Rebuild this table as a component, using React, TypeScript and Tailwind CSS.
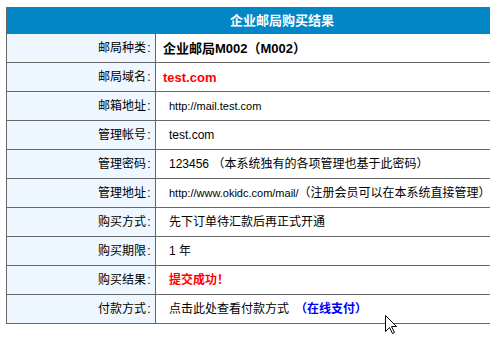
import React from "react";

const rows: { label: string; value: React.ReactNode }[] = [
  {
    label: "邮局种类",
    value: <span className="font-bold text-[13px] text-black">企业邮局M002（M002）</span>,
  },
  {
    label: "邮局域名",
    value: <span className="font-bold text-[13px] text-[#ff0000]">test.com</span>,
  },
  {
    label: "邮箱地址",
    value: <span className="ml-[6px] text-[11px]">http://mail.test.com</span>,
  },
  {
    label: "管理帐号",
    value: <span className="ml-[6px]">test.com</span>,
  },
  {
    label: "管理密码",
    value: <span className="ml-[6px]">123456 （本系统独有的各项管理也基于此密码）</span>,
  },
  {
    label: "管理地址",
    value: (
      <span className="ml-[6px]">
        <span className="text-[11px]">http://www.okidc.com/mail/</span>
        （注册会员可以在本系统直接管理）
      </span>
    ),
  },
  {
    label: "购买方式",
    value: <span className="ml-[6px]">先下订单待汇款后再正式开通</span>,
  },
  {
    label: "购买期限",
    value: <span className="ml-[6px]">1 年</span>,
  },
  {
    label: "购买结果",
    value: <span className="ml-[6px] font-bold text-[#ff0000]">提交成功！</span>,
  },
  {
    label: "付款方式",
    value: (
      <span className="ml-[6px]">
        点击此处查看付款方式
        <span className="ml-[6px] font-bold text-[#0000ff]">（在线支付）</span>
      </span>
    ),
  },
];

export default function App() {
  return (
    <div className="relative w-[490px] h-[342px] overflow-hidden bg-white font-['Liberation_Sans','Noto_Sans_CJK_SC',sans-serif] text-[12px] text-black">
      <div className="ml-[6px] mt-[7px] w-[552px] border border-[#666666]">
        <div className="h-[25px] bg-[#0286c6] flex items-center justify-center text-white font-bold text-[13px] leading-none">
          企业邮局购买结果
        </div>
        {rows.map((r) => (
          <div
            key={r.label}
            className="flex h-[29px] border-t border-[#666666] leading-none"
          >
            <div className="w-[149px] shrink-0 border-r border-[#666666] bg-[#eef6ff] flex items-center justify-end pr-[3px]">
              <span>{r.label}</span>
              <span className="inline-block w-[6px] text-center">:</span>
            </div>
            <div className="flex-1 flex items-center pl-[7px] whitespace-nowrap">
              {r.value}
            </div>
          </div>
        ))}
      </div>
      <svg
        className="absolute left-[385px] top-[315px]"
        width="13"
        height="20"
        viewBox="0 0 13 20"
      >
        <path
          d="M0.5 0.5 L0.5 16.5 L4.5 12.5 L7.5 18.5 L9.5 17.5 L6.5 11.5 L11.5 11.5 Z"
          fill="white"
          stroke="black"
          strokeWidth="1"
        />
      </svg>
    </div>
  );
}
